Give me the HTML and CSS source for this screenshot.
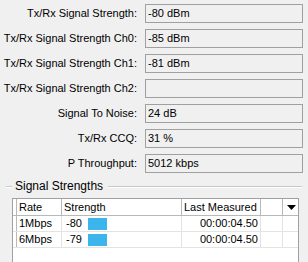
FILE: index.html
```html
<!DOCTYPE html>
<html>
<head>
<meta charset="utf-8">
<link rel="stylesheet" href="styles.css">
</head>
<body>
<div class="form">
  <div class="label">Tx/Rx Signal Strength:</div><div class="field">-80 dBm</div>
  <div class="label">Tx/Rx Signal Strength Ch0:</div><div class="field">-85 dBm</div>
  <div class="label">Tx/Rx Signal Strength Ch1:</div><div class="field">-81 dBm</div>
  <div class="label">Tx/Rx Signal Strength Ch2:</div><div class="field"></div>
  <div class="label">Signal To Noise:</div><div class="field">24 dB</div>
  <div class="label">Tx/Rx CCQ:</div><div class="field">31 %</div>
  <div class="label">P Throughput:</div><div class="field">5012 kbps</div>
</div>
<div class="group">
  <div class="group-head"><span class="line short"></span><span class="group-title">Signal Strengths</span><span class="line long"></span></div>
  <div class="table">
    <div class="row head">
      <div class="cell ind"></div>
      <div class="cell">Rate</div>
      <div class="cell">Strength</div>
      <div class="cell">Last Measured</div>
      <div class="cell"></div>
      <div class="cell arrow"><svg width="9" height="5" viewBox="0 0 9 5"><path d="M0 0H9L4.5 5Z" fill="#000"/></svg></div>
    </div>
    <div class="row">
      <div class="cell ind"></div>
      <div class="cell">1Mbps</div>
      <div class="cell strength">-80 <span class="bar"></span></div>
      <div class="cell time">00:00:04.50</div>
      <div class="cell"></div>
      <div class="cell blank"></div>
    </div>
    <div class="row">
      <div class="cell ind"></div>
      <div class="cell">6Mbps</div>
      <div class="cell strength">-79 <span class="bar"></span></div>
      <div class="cell time">00:00:04.50</div>
      <div class="cell"></div>
      <div class="cell blank"></div>
    </div>
  </div>
</div>
</body>
</html>
```
FILE: styles.css
```css
html, body {
  margin: 0;
  padding: 0;
  background: #f0f0f0;
  font-family: "Liberation Sans", Arial, sans-serif;
  font-size: 11px;
  color: #000;
  overflow: hidden;
  height: 262px;
}
.form {
  display: grid;
  grid-template-columns: 137px 158px;
  column-gap: 8px;
  row-gap: 6px;
  grid-auto-rows: 19px;
  padding-top: 4px;
}
.label {
  text-align: right;
  line-height: 19px;
  white-space: nowrap;
}
.field {
  box-sizing: border-box;
  border: 1px solid #a0a0a0;
  padding-left: 2px;
  line-height: 17px;
  white-space: nowrap;
}
.group {
  padding: 6px 6px 0 6px;
}
.group-head {
  display: flex;
  align-items: center;
  height: 14px;
  margin-bottom: 5px;
}
.line {
  height: 1px;
  border-top: 1px solid #c8c8c8;
  background: #fff;
  margin-top: 2px;
}
.line.short { width: 6px; flex: none; }
.line.long { flex: 1; margin-left: 5px; }
.group-title {
  padding-left: 3px;
  font-size: 12px;
  white-space: nowrap;
  flex: none;
}
.table {
  margin-left: 6px;
  width: 287px;
  box-sizing: border-box;
  border: 1px solid #a0a0a0;
  border-bottom: none;
  background: #fff;
  height: 64px;
}
.row {
  display: grid;
  grid-template-columns: 4px 45px 120px 79px 22px 15px;
  height: 15px;
  border-bottom: 1px solid #e3e3e3;
}
.row.head {
  height: 16px;
  border-bottom: 1px solid #b8b8b8;
}
.cell {
  border-right: 1px solid #e3e3e3;
  line-height: 15px;
  padding-left: 2px;
  white-space: nowrap;
  overflow: hidden;
  box-sizing: border-box;
}
.row.head .cell {
  border-right-color: #b8b8b8;
  line-height: 16px;
}
.cell.ind {
  padding: 0;
  border-right: 1px solid #b8b8b8;
}
.cell.arrow {
  border-right: none;
  display: flex;
  align-items: center;
  justify-content: center;
}
.cell.blank { border-right: none; }
.strength {
  display: flex;
  align-items: center;
  padding-left: 4px;
}
.bar {
  display: inline-block;
  width: 19px;
  height: 12px;
  background: #3cb4ec;
  margin-left: 6px;
}
.time {
  text-align: right;
  padding-right: 2px;
}
```
